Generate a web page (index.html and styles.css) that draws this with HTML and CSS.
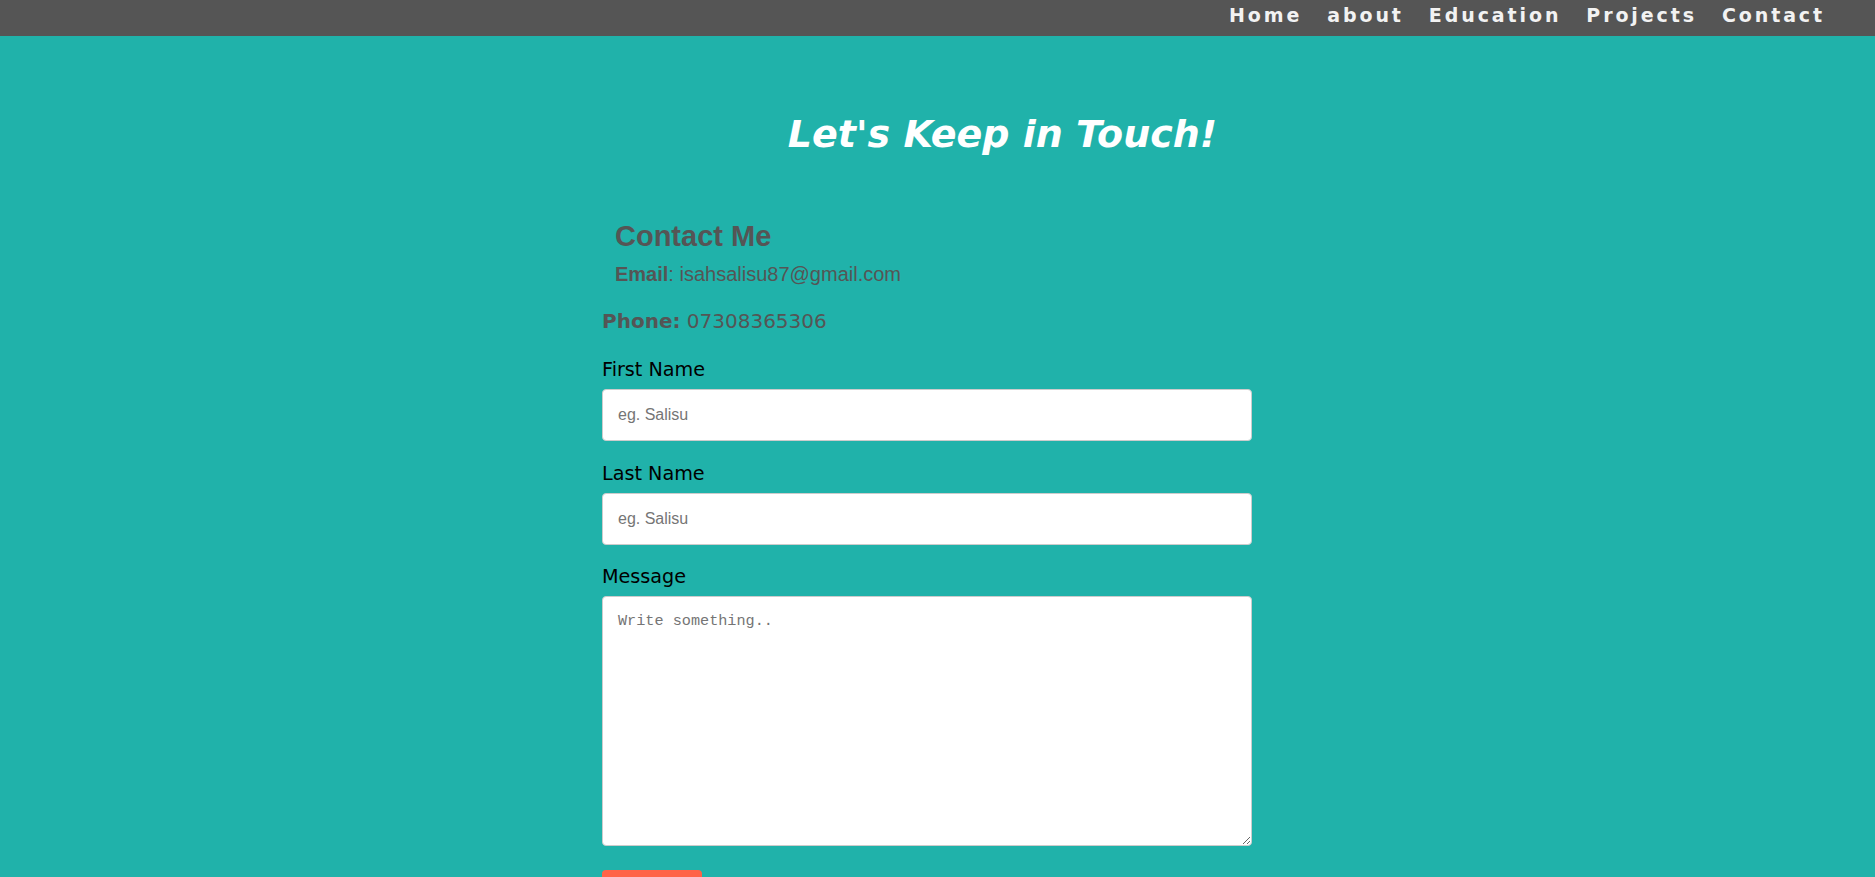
FILE: index.html
```html
<!DOCTYPE html>
<html lang="en">
<head>
<meta charset="utf-8">
<title>Contact</title>
<link rel="stylesheet" href="styles.css">
</head>
<body>
<nav class="topnav">
  <a href="#home">Home</a>
  <a href="#about">about</a>
  <a href="#education">Education</a>
  <a href="#projects">Projects</a>
  <a href="#contact">Contact</a>
</nav>

<header class="title">
  <h1>Let's Keep in Touch!</h1>
</header>

<main class="contact">
  <div class="contact-info">
    <h2>Contact Me</h2>
    <p class="email"><b>Email</b>: isahsalisu87@gmail.com</p>
  </div>
  <p class="phone"><b>Phone:</b> 07308365306</p>

  <form class="contact-form">
    <label for="fname">First Name</label>
    <input type="text" id="fname" name="firstname" placeholder="eg. Salisu">

    <label for="lname">Last Name</label>
    <input type="text" id="lname" name="lastname" placeholder="eg. Salisu">

    <label for="message">Message</label>
    <textarea id="message" name="message" placeholder="Write something.."></textarea>

    <button type="submit" class="submit">Submit</button>
  </form>
</main>
</body>
</html>
```

FILE: styles.css
```css
html, body {
  margin: 0;
  padding: 0;
}

body {
  background: #20b2aa;
  font-family: "DejaVu Sans", Verdana, sans-serif;
}

.topnav {
  display: flex;
  justify-content: flex-end;
  gap: 25px;
  height: 36px;
  padding-right: 50px;
  background: #555555;
  box-sizing: border-box;
}

.topnav a {
  font-family: "DejaVu Sans", Verdana, sans-serif;
  font-weight: bold;
  font-size: 19px;
  line-height: 30px;
  letter-spacing: 2.9px;
  color: #f2f2f2;
  text-decoration: none;
}

.title {
  padding-top: 76px;
  padding-left: 130px;
  text-align: center;
}

.title h1 {
  margin: 0;
  font-family: "DejaVu Sans", Verdana, sans-serif;
  font-style: italic;
  font-weight: bold;
  font-size: 38px;
  line-height: 44px;
  color: #ffffff;
}

.contact {
  width: 650px;
  margin-left: 602px;
  padding-bottom: 40px;
}

.contact-info {
  padding-left: 13px;
}

.contact-info h2 {
  margin: 63px 0 0;
  font-family: "Liberation Sans", Arial, sans-serif;
  font-weight: bold;
  font-size: 29px;
  line-height: 34px;
  color: #555555;
}

.email {
  margin: 9px 0 0;
  font-family: "Liberation Sans", Arial, sans-serif;
  font-size: 20px;
  line-height: 24px;
  color: #555555;
}

.phone {
  margin: 22.5px 0 0;
  font-family: "DejaVu Sans", Verdana, sans-serif;
  font-size: 20px;
  line-height: 24px;
  color: #555555;
}

.contact-form {
  display: flex;
  flex-direction: column;
  margin-top: 26.5px;
}

.contact-form label {
  display: block;
  font-family: "DejaVu Sans", Verdana, sans-serif;
  font-size: 19.2px;
  line-height: 22px;
  color: #000000;
  margin-bottom: 8px;
}

.contact-form input,
.contact-form textarea {
  box-sizing: border-box;
  width: 100%;
  margin: 0 0 21.5px;
  border: 1px solid #cccccc;
  border-radius: 4px;
  background: #ffffff;
  color: #000000;
}

.contact-form input {
  height: 52px;
  padding: 0 15px;
  font-family: "Liberation Sans", Arial, sans-serif;
  font-size: 16px;
}

.contact-form textarea {
  height: 250px;
  padding: 15px 15px;
  font-family: "Liberation Mono", "Courier New", monospace;
  font-size: 15.2px;
  line-height: 18px;
  resize: vertical;
  margin-bottom: 24px;
}

.contact-form input::placeholder,
.contact-form textarea::placeholder {
  color: #757575;
}

.submit {
  align-self: flex-start;
  padding: 14px 25px;
  border: none;
  border-radius: 4px;
  background: #ff6347;
  color: #ffffff;
  font-family: "Liberation Sans", Arial, sans-serif;
  font-size: 16px;
  cursor: pointer;
}
```
